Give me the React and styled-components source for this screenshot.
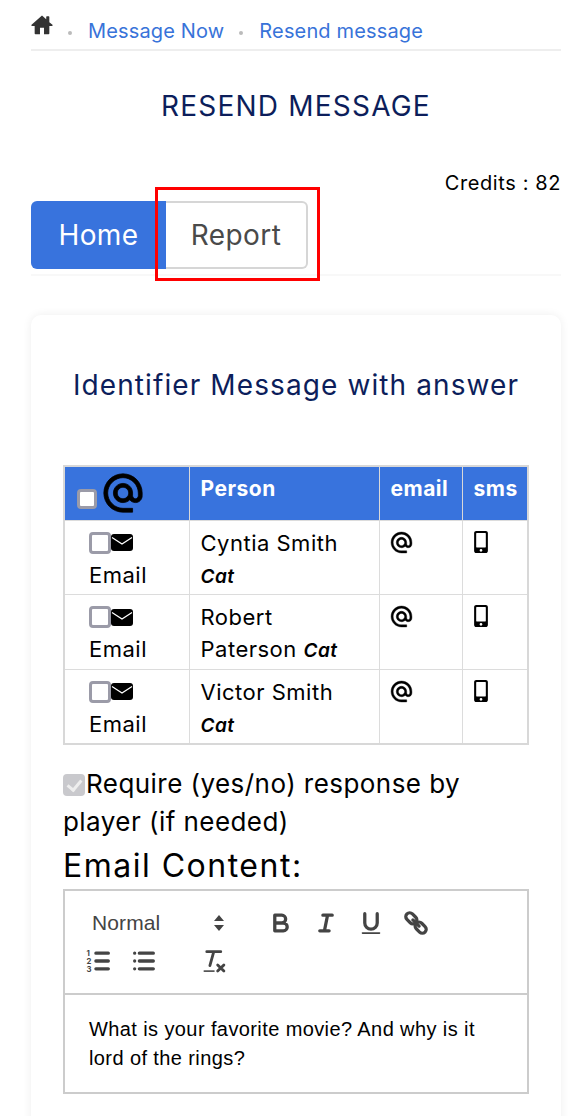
import React from "react";
import styled, { createGlobalStyle } from "styled-components";
import { FaMobileAlt } from "react-icons/fa";

const GlobalStyle = createGlobalStyle`
  html, body {
    margin: 0;
    height: 1116px;
    overflow: hidden;
    background: #fff;
  }
  body {
    font-family: "Inter", "Noto Sans", sans-serif;
    color: #000;
  }
`;

const people = [
  { id: 1, first: "Cyntia Smith", tag: "Cat" },
  { id: 2, first: "Robert Paterson", tag: "Cat" },
  { id: 3, first: "Victor Smith", tag: "Cat" },
];

const HomeIcon = () => (
  <HomeSvg viewBox="0 0 24 24">
    <path d="M12 1.5 0.6 11.8c-.5.5-.2 1.2.5 1.2H4v8.2c0 .5.4.8.8.8h5v-7h4.4v7h5c.4 0 .8-.3.8-.8V13h2.9c.7 0 1-.7.5-1.2L20 9V3.2c0-.4-.3-.7-.7-.7h-2c-.4 0-.7.3-.7.7v2.6z" />
  </HomeSvg>
);

const AtGlyph = ({ className }) => (
  <svg className={className} viewBox="0 0 24 24" stroke="#000" strokeWidth="0.4" fill="#000">
    <path d="M12 2C6.48 2 2 6.48 2 12s4.48 10 10 10h5v-2h-5c-4.34 0-8-3.66-8-8s3.66-8 8-8 8 3.66 8 8v1.43c0 .79-.71 1.57-1.5 1.57s-1.5-.78-1.5-1.57V12c0-2.76-2.24-5-5-5s-5 2.24-5 5 2.24 5 5 5c1.38 0 2.64-.56 3.54-1.47.65.89 1.77 1.47 2.96 1.47 1.97 0 3.5-1.6 3.5-3.57V12c0-5.52-4.48-10-10-10zm0 13c-1.66 0-3-1.34-3-3s1.34-3 3-3 3 1.34 3 3-1.34 3-3 3z" />
  </svg>
);

const MailIcon = () => (
  <MailSvg viewBox="0 0 22 17">
    <rect x="0" y="0" width="22" height="17" rx="3" fill="#000" />
    <path d="M1 3.5 11 10 21 3.5" fill="none" stroke="#fff" strokeWidth="1.3" />
  </MailSvg>
);

const Quill = ({ children }) => (
  <QuillSvg viewBox="0 0 18 18" fill="none" stroke="#444" strokeWidth="2.1" strokeLinecap="round" strokeLinejoin="round">
    {children}
  </QuillSvg>
);

export default function App() {
  return (
    <Page>
      <GlobalStyle />
      <Breadcrumb>
        <HomeIcon />
        <Dot />
        <Crumb>Message Now</Crumb>
        <Dot />
        <Crumb>Resend message</Crumb>
      </Breadcrumb>
      <Title>RESEND MESSAGE</Title>
      <Credits>Credits : 82</Credits>
      <Tabs>
        <Tab $active>Home</Tab>
        <Tab>Report</Tab>
        <RedMark />
      </Tabs>
      <Card>
        <CardTitle>Identifier Message with answer</CardTitle>
        <Table>
          <colgroup>
            <col style={{ width: 125 }} />
            <col style={{ width: 190 }} />
            <col style={{ width: 83 }} />
            <col style={{ width: 66 }} />
          </colgroup>
          <thead>
            <tr>
              <Head>
                <HeadPick>
                  <Check $head type="checkbox" />
                  <HeadAt />
                </HeadPick>
              </Head>
              <Head>Person</Head>
              <Head>email</Head>
              <Head>sms</Head>
            </tr>
          </thead>
          <tbody>
            {people.map((p) => (
              <tr key={p.id}>
                <PickCell>
                  <PickRow>
                    <Check type="checkbox" />
                    <MailIcon />
                  </PickRow>
                  Email
                </PickCell>
                <Cell>
                  {p.first} <Tag>{p.tag}</Tag>
                </Cell>
                <Cell>
                  <RowAt />
                </Cell>
                <Cell>
                  <PhoneIcon size={22} />
                </Cell>
              </tr>
            ))}
          </tbody>
        </Table>
        <Require>
          <Check $done type="checkbox" defaultChecked disabled />
          Require (yes/no) response by player (if needed)
        </Require>
        <ContentLabel>Email Content:</ContentLabel>
        <Editor>
          <Toolbar>
            <Picker>
              Normal
              <svg width="14" height="18" viewBox="0 0 14 18" fill="#444">
                <path d="M7 1 12 7H2zM7 17 2 11h10z" />
              </svg>
            </Picker>
            <ToolGroup>
              <ToolButton>
                <Quill>
                  <path d="M5 4h4.5a2.5 2.5 0 0 1 0 5H5zM5 9h5.5a2.5 2.5 0 0 1 0 5H5z" />
                </Quill>
              </ToolButton>
              <ToolButton>
                <Quill>
                  <path d="M7 4h6M5 14h6M8 14l2-10" />
                </Quill>
              </ToolButton>
              <ToolButton>
                <Quill>
                  <path d="M5 3v6a4 4 0 0 0 8 0V3" />
                  <rect x="3" y="15" width="12" height="1" rx=".5" fill="#444" stroke="none" />
                </Quill>
              </ToolButton>
              <ToolButton>
                <Quill>
                  <path d="M7 7l4 4" />
                  <rect x="2" y="3.5" width="8" height="5" rx="2.5" transform="rotate(45 6 6)" />
                  <rect x="8" y="9.5" width="8" height="5" rx="2.5" transform="rotate(45 12 12)" />
                </Quill>
              </ToolButton>
            </ToolGroup>
            <ToolGroup>
              <ToolButton>
                <Quill>
                  <path d="M7 4h8M7 9h8M7 14h8" />
                  <text x="1" y="6" fontSize="5" fontWeight="700" fill="#444" stroke="none">1</text>
                  <text x="1" y="11" fontSize="5" fontWeight="700" fill="#444" stroke="none">2</text>
                  <text x="1" y="16" fontSize="5" fontWeight="700" fill="#444" stroke="none">3</text>
                </Quill>
              </ToolButton>
              <ToolButton>
                <Quill>
                  <path d="M6 4h9M6 9h9M6 14h9M3 4h0M3 9h0M3 14h0" />
                </Quill>
              </ToolButton>
              <ClearButton>
                <Quill>
                  <path d="M5 3h9M9.5 3 7 12" strokeWidth="1.8" />
                  <rect x="3" y="15" width="7" height="1" fill="#444" stroke="none" />
                  <path d="M12 11.5l4 4M16 11.5l-4 4" strokeWidth="1.8" />
                </Quill>
              </ClearButton>
            </ToolGroup>
          </Toolbar>
          <EditorBody>What is your favorite movie? And why is it lord of the rings?</EditorBody>
        </Editor>
      </Card>
    </Page>
  );
}

const Page = styled.div`
  padding: 0 25px 0 31px;
`;
const Breadcrumb = styled.nav`
  display: flex;
  align-items: center;
  height: 49px;
  border-bottom: 2px solid #eeeeee;
`;
const HomeSvg = styled.svg`
  width: 22px;
  height: 22px;
  fill: #333;
  align-self: flex-start;
  margin-top: 14px;
`;
const Dot = styled.span`
  width: 4px;
  height: 4px;
  border-radius: 50%;
  background: #bbb;
  margin: 16px 16px 0 15px;
`;
const Crumb = styled.span`
  color: #3873d9;
  font-size: 20px;
  margin-top: 13px;
  letter-spacing: 0.15px;
`;
const Title = styled.h1`
  margin: 37px 0 0;
  text-align: center;
  color: #0c1e5b;
  font-size: 28px;
  line-height: 36px;
  font-weight: 400;
  letter-spacing: 1.2px;
`;
const Credits = styled.div`
  text-align: right;
  font-size: 20px;
  line-height: 24px;
  margin-top: 47px;
  letter-spacing: 0.6px;
`;
const Tabs = styled.div`
  position: relative;
  display: flex;
  margin-top: 6px;
  padding-bottom: 5px;
  border-bottom: 2px solid #f8f8f8;
`;
const Tab = styled.div`
  height: 68px;
  box-sizing: border-box;
  display: flex;
  align-items: center;
  justify-content: center;
  font-size: 28px;
  letter-spacing: 0.4px;
  width: ${(p) => (p.$active ? "135px" : "142px")};
  color: ${(p) => (p.$active ? "#fff" : "#4a4a4a")};
  background: ${(p) => (p.$active ? "#3873dd" : "#fff")};
  border: ${(p) => (p.$active ? "none" : "2px solid #d6d6d6")};
  border-radius: ${(p) => (p.$active ? "6px 0 0 6px" : "0 6px 6px 0")};
  border-left: ${(p) => (p.$active ? "none" : "0")};
`;
const RedMark = styled.div`
  position: absolute;
  left: 124px;
  top: -14px;
  width: 165px;
  height: 94px;
  box-sizing: border-box;
  border: 3px solid #f00;
`;
const Card = styled.section`
  margin-top: 39px;
  padding: 0 32px 60px;
  border-radius: 10px;
  box-shadow: 0 0 10px rgba(0, 0, 0, 0.07);
`;
const CardTitle = styled.h2`
  margin: 0;
  padding-top: 50px;
  height: 100px;
  box-sizing: border-box;
  text-align: center;
  color: #0c1e5b;
  font-size: 28px;
  line-height: 40px;
  font-weight: 400;
  letter-spacing: 1.1px;
`;
const Table = styled.table`
  margin-top: 50px;
  width: 464px;
  table-layout: fixed;
  border-collapse: collapse;
  border: 2px solid #d8d8d8;
  font-size: 22px;
  line-height: 32px;
  letter-spacing: 0.5px;
`;
const Head = styled.th`
  height: 54px;
  box-sizing: border-box;
  padding: 6px 12px 0 11px;
  background: #3873dd;
  color: #fff;
  text-align: left;
  vertical-align: top;
  font-size: 21px;
  font-weight: 700;
  letter-spacing: 0.5px;
  border-left: 1.5px solid #d8d8d8;
`;
const HeadPick = styled.div`
  display: flex;
  align-items: flex-start;
  height: 40px;
`;
const HeadAt = styled(AtGlyph)`
  width: 46px;
  height: 46px;
  flex: none;
  margin: -3px 0 0 3px;
`;
const Cell = styled.td`
  padding: 6px 12px 1.5px 11px;
  vertical-align: top;
  border: 1.5px solid #dcdcdc;
`;
const RowAt = styled(AtGlyph)`
  display: block;
  width: 25px;
  height: 25px;
  margin: 3px 0 0 -2px;
`;
const PhoneIcon = styled(FaMobileAlt)`
  display: block;
  margin: 4px 0 0 -4px;
`;
const PickCell = styled(Cell)`
  padding-left: 24px;
`;
const PickRow = styled.div`
  display: flex;
  align-items: center;
  height: 32px;
`;
const MailSvg = styled.svg`
  width: 22px;
  height: 17px;
`;
const Tag = styled.i`
  font-size: 19px;
  font-weight: 600;
`;
const Check = styled.input`
  appearance: none;
  box-sizing: border-box;
  margin: ${(p) => (p.$head ? "16px 0 0 1px" : "0")};
  width: ${(p) => (p.$head ? "20px" : "22px")};
  height: ${(p) => (p.$head ? "20px" : "22px")};
  flex: none;
  background: #fff;
  border: 3.5px solid #9b9ba8;
  border-radius: 4px;
  &:disabled {
    position: relative;
    background: #c9c9cd;
    border: none;
    vertical-align: -3px;
    margin-right: 1px;
  }
  &:disabled::after {
    content: "";
    position: absolute;
    left: 7px;
    top: 3px;
    width: 6px;
    height: 11px;
    border: solid #eee;
    border-width: 0 3px 3px 0;
    transform: rotate(40deg);
  }
`;
const Require = styled.label`
  display: block;
  margin-top: 20px;
  font-size: 26px;
  line-height: 38px;
  letter-spacing: 0.45px;
`;
const ContentLabel = styled.div`
  font-size: 32px;
  line-height: 36px;
  margin-top: 7px;
  letter-spacing: 1.5px;
`;
const Editor = styled.div`
  margin-top: 5px;
  width: 466px;
  box-sizing: border-box;
  border: 2px solid #ccc;
`;
const Toolbar = styled.div`
  display: flex;
  flex-wrap: wrap;
  align-items: center;
  height: 104px;
  box-sizing: border-box;
  padding: 13px 20px 0;
  align-content: flex-start;
  border-bottom: 2px solid #ccc;
`;
const Picker = styled.div`
  width: 147px;
  padding: 0 6px 0 7px;
  box-sizing: border-box;
  height: 38px;
  display: flex;
  align-items: center;
  justify-content: space-between;
  margin-right: 35px;
  font-family: "Liberation Sans", Arial, sans-serif;
  font-size: 21px;
  letter-spacing: 0.1px;
  color: #444;
`;
const ToolGroup = styled.div`
  display: flex;
`;
const ToolButton = styled.div`
  width: 45px;
  height: 38px;
  display: flex;
  align-items: center;
  justify-content: flex-start;
`;
const ClearButton = styled(ToolButton)`
  margin-left: 24px;
`;
const QuillSvg = styled.svg`
  width: 28px;
  height: 28px;
  overflow: visible;
`;
const EditorBody = styled.div`
  padding: 20px 24px 18px;
  height: 97px;
  box-sizing: border-box;
  font-family: "Liberation Sans", Arial, sans-serif;
  font-size: 20px;
  line-height: 29px;
  letter-spacing: 0.4px;
`;
